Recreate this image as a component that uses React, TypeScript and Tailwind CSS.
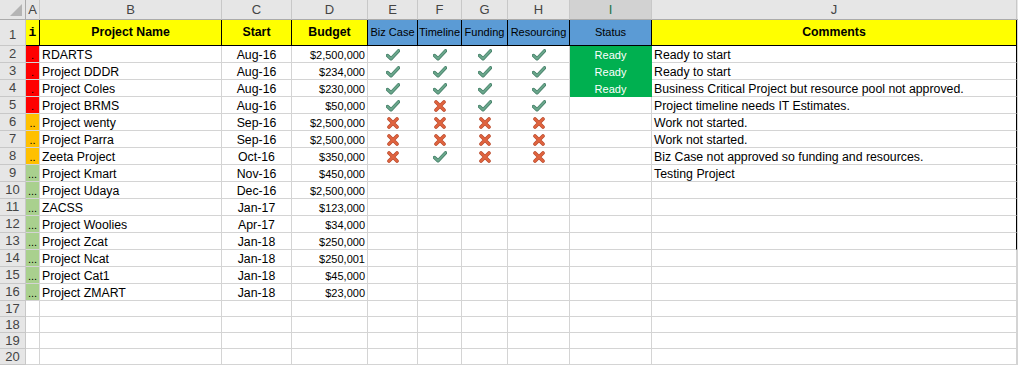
import React from "react";

type Mark = "y" | "n";

interface Project {
  name: string;
  start: string;
  budget: string;
  flag: "red" | "amber" | "green";
  marks?: Mark[];
  ready?: boolean;
  comment?: string;
}

const projects: Project[] = [
  { name: "RDARTS", start: "Aug-16", budget: "$2,500,000", flag: "red", marks: ["y", "y", "y", "y"], ready: true, comment: "Ready to start" },
  { name: "Project DDDR", start: "Aug-16", budget: "$234,000", flag: "red", marks: ["y", "y", "y", "y"], ready: true, comment: "Ready to start" },
  { name: "Project Coles", start: "Aug-16", budget: "$230,000", flag: "red", marks: ["y", "y", "y", "y"], ready: true, comment: "Business Critical Project but resource pool not approved." },
  { name: "Project BRMS", start: "Aug-16", budget: "$50,000", flag: "red", marks: ["y", "n", "y", "y"], comment: "Project timeline needs IT Estimates." },
  { name: "Project wenty", start: "Sep-16", budget: "$2,500,000", flag: "amber", marks: ["n", "n", "n", "n"], comment: "Work not started." },
  { name: "Project Parra", start: "Sep-16", budget: "$2,500,000", flag: "amber", marks: ["n", "n", "n", "n"], comment: "Work not started." },
  { name: "Zeeta Project", start: "Oct-16", budget: "$350,000", flag: "amber", marks: ["n", "y", "n", "n"], comment: "Biz Case not approved so funding and resources." },
  { name: "Project Kmart", start: "Nov-16", budget: "$450,000", flag: "green", comment: "Testing Project" },
  { name: "Project Udaya", start: "Dec-16", budget: "$2,500,000", flag: "green" },
  { name: "ZACSS", start: "Jan-17", budget: "$123,000", flag: "green" },
  { name: "Project Woolies", start: "Apr-17", budget: "$34,000", flag: "green" },
  { name: "Project Zcat", start: "Jan-18", budget: "$250,000", flag: "green" },
  { name: "Project Ncat", start: "Jan-18", budget: "$250,001", flag: "green" },
  { name: "Project Cat1", start: "Jan-18", budget: "$45,000", flag: "green" },
  { name: "Project ZMART", start: "Jan-18", budget: "$23,000", flag: "green" },
];

const letters = ["A", "B", "C", "D", "E", "F", "G", "H", "I", "J"];
const widths = [
  "w-[14px]",
  "w-[182px]",
  "w-[70px]",
  "w-[76px]",
  "w-[50px]",
  "w-[44px]",
  "w-[46px]",
  "w-[62px]",
  "w-[82px]",
  "w-[365px]",
];

const flagBg = {
  red: "bg-[#ff0000]",
  amber: "bg-[#ffc000]",
  green: "bg-[#a9d08e]",
};
const flagDots = { red: ".", amber: "..", green: "..." };

function Check() {
  return (
    <svg width="14" height="12" viewBox="0 0 14 12">
      <path d="M1.5 6.5 L5 9.8 L12.5 1.8" fill="none" stroke="#3f7a63" strokeWidth="3.4" strokeLinecap="round" strokeLinejoin="round" />
      <path d="M1.5 6.5 L5 9.8 L12.5 1.8" fill="none" stroke="#6aa68b" strokeWidth="2" strokeLinecap="round" strokeLinejoin="round" />
    </svg>
  );
}

function Cross() {
  return (
    <svg width="12" height="12" viewBox="0 0 12 12">
      <path d="M2 2 L10 10 M10 2 L2 10" fill="none" stroke="#b84a2c" strokeWidth="3.6" strokeLinecap="round" />
      <path d="M2 2 L10 10 M10 2 L2 10" fill="none" stroke="#e0643f" strokeWidth="2.4" strokeLinecap="round" />
    </svg>
  );
}

function RowHead({ n, tall, h }: { n: number; tall?: boolean; h: string }) {
  return (
    <div
      className={`w-[26px] ${h} shrink-0 bg-[#e6e6e6] border-r border-b border-[#c8c8c8] text-[13px] text-[#444] flex justify-center ${tall ? "items-end pb-[1px]" : "items-center"}`}
    >
      {n}
    </div>
  );
}

export default function App() {
  const emptyRows = [17, 18, 19, 20];
  return (
    <div className="w-[1018px] h-[366px] overflow-hidden bg-white text-black" style={{ fontFamily: '"Liberation Sans", Arial, sans-serif' }}>
      {/* column letters */}
      <div className="flex h-[20px]">
        <div className="w-[26px] shrink-0 bg-[#e6e6e6] border-r border-b border-[#ababab] relative">
          <div className="absolute right-[3px] bottom-[3px] w-0 h-0 border-l-[12px] border-l-transparent border-b-[12px] border-b-[#b4b4b4]" />
        </div>
        {letters.map((l, i) => (
          <div
            key={l}
            className={`${widths[i]} shrink-0 border-r border-b border-b-[#ababab] border-r-[#c8c8c8] text-[13px] flex items-center justify-center ${l === "I" ? "bg-[#d2d2d2] text-[#217346]" : "bg-[#e6e6e6] text-[#444]"}`}
          >
            {l}
          </div>
        ))}
        <div className="flex-1 bg-[#e6e6e6] border-b border-[#ababab]" />
      </div>

      {/* header row */}
      <div className="flex h-[26px]">
        <RowHead n={1} tall h="h-[26px]" />
        <div className="w-[14px] shrink-0 bg-[#ffff00] border-r border-b border-black flex items-center justify-center text-[13px] font-bold" style={{ fontFamily: '"Liberation Mono", monospace' }}>
          i
        </div>
        <div className="w-[182px] shrink-0 bg-[#ffff00] border-r border-b border-black flex items-center justify-center text-[12.3px] font-bold">Project Name</div>
        <div className="w-[70px] shrink-0 bg-[#ffff00] border-r border-b border-black flex items-center justify-center text-[12.3px] font-bold">Start</div>
        <div className="w-[76px] shrink-0 bg-[#ffff00] border-r border-b border-black flex items-center justify-center text-[12.3px] font-bold">Budget</div>
        {["Biz Case", "Timeline", "Funding", "Resourcing", "Status"].map((t, i) => (
          <div key={t} className={`${widths[i + 4]} shrink-0 bg-[#5b9bd5] border-r border-b border-black flex items-center justify-center text-[11px] whitespace-nowrap`}>
            {t}
          </div>
        ))}
        <div className="w-[365px] shrink-0 bg-[#ffff00] border-r border-b border-black flex items-center justify-center text-[12.3px] font-bold">Comments</div>
        <div className="flex-1 bg-[#d4d4d4]" />
      </div>

      {/* data rows */}
      {projects.map((p, r) => (
        <div key={p.name} className="flex h-[17px]">
          <RowHead n={r + 2} h="h-[17px]" />
          <div className={`w-[14px] shrink-0 ${flagBg[p.flag]} border-b border-r border-[#d4d4d4] text-[11px] leading-[13px] flex items-end justify-center`}>
            {flagDots[p.flag]}
          </div>
          <div className="w-[182px] shrink-0 border-r border-b border-[#d4d4d4] text-[12.3px] leading-[14px] px-[2px] flex items-end whitespace-nowrap">{p.name}</div>
          <div className="w-[70px] shrink-0 border-r border-b border-[#d4d4d4] text-[12.3px] leading-[14px] flex items-end justify-center">{p.start}</div>
          <div className="w-[76px] shrink-0 border-r border-b border-[#d4d4d4] text-[11px] leading-[14px] px-[2px] flex items-end justify-end">{p.budget}</div>
          {[0, 1, 2, 3].map((c) => (
            <div key={c} className={`${widths[c + 4]} shrink-0 border-r border-b border-[#d4d4d4] flex items-center justify-center pt-[1px]`}>
              {p.marks ? p.marks[c] === "y" ? <Check /> : <Cross /> : null}
            </div>
          ))}
          <div
            className={`w-[82px] shrink-0 border-r border-b text-[11px] leading-[14px] flex items-end justify-center ${p.ready ? "bg-[#00b050] border-[#00b050] text-white" : "border-[#d4d4d4]"}`}
          >
            {p.ready ? "Ready" : ""}
          </div>
          <div className={`w-[365px] shrink-0 border-b border-b-[#d4d4d4] border-r ${r < 12 ? "border-r-black" : "border-r-[#d4d4d4]"} text-[12.3px] leading-[14px] px-[2px] flex items-end whitespace-nowrap`}>
            {p.comment}
          </div>
          <div className="flex-1 bg-[#d4d4d4]" />
        </div>
      ))}

      {emptyRows.map((n) => (
        <div key={n} className="flex h-[16px]">
          <RowHead n={n} h="h-[16px]" />
          {widths.map((w, i) => (
            <div key={i} className={`${w} shrink-0 border-r border-b border-[#d4d4d4]`} />
          ))}
          <div className="flex-1 bg-[#d4d4d4]" />
        </div>
      ))}
    </div>
  );
}
